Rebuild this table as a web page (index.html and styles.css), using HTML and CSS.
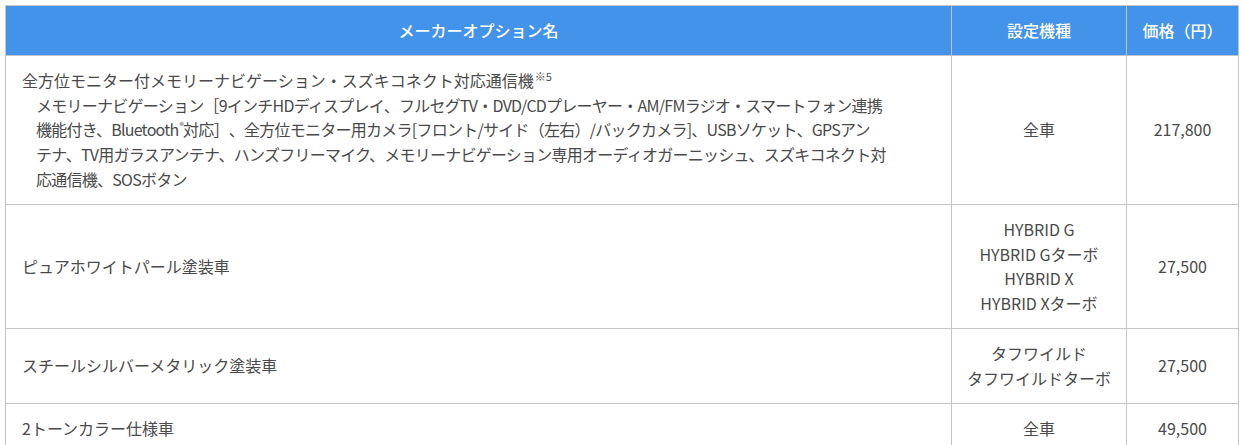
FILE: index.html
```html
<!DOCTYPE html>
<html lang="ja">
<head>
<meta charset="utf-8">
<link rel="stylesheet" href="styles.css">
</head>
<body>
<table class="spec">
  <colgroup>
    <col class="c-name">
    <col class="c-model">
    <col class="c-price">
  </colgroup>
  <thead>
    <tr>
      <th>メーカーオプション名</th>
      <th>設定機種</th>
      <th>価格（円）</th>
    </tr>
  </thead>
  <tbody>
    <tr>
      <td class="name">全方位モニター付メモリーナビゲーション・スズキコネクト対応通信機<sup>※5</sup>
        <div class="note">メモリーナビゲーション［9インチHDディスプレイ、フルセグTV・DVD/CDプレーヤー・AM/FMラジオ・スマートフォン連携<br>機能付き、Bluetooth<sup class="reg">®</sup>対応］、全方位モニター用カメラ[フロント/サイド（左右）/バックカメラ]、USBソケット、GPSアン<br>テナ、TV用ガラスアンテナ、ハンズフリーマイク、メモリーナビゲーション専用オーディオガーニッシュ、スズキコネクト対<br>応通信機、SOSボタン</div>
      </td>
      <td>全車</td>
      <td>217,800</td>
    </tr>
    <tr>
      <td class="name">ピュアホワイトパール塗装車</td>
      <td>HYBRID G<br>HYBRID Gターボ<br>HYBRID X<br>HYBRID Xターボ</td>
      <td>27,500</td>
    </tr>
    <tr>
      <td class="name">スチールシルバーメタリック塗装車</td>
      <td>タフワイルド<br>タフワイルドターボ</td>
      <td>27,500</td>
    </tr>
    <tr>
      <td class="name">2トーンカラー仕様車</td>
      <td>全車</td>
      <td>49,500</td>
    </tr>
  </tbody>
</table>
</body>
</html>
```

FILE: styles.css
```css
html, body {
  margin: 0;
  padding: 0;
  background: #fff;
}
body {
  padding: 5px;
  font-family: "Noto Sans CJK JP", "Noto Sans", sans-serif;
  font-size: 16px;
  line-height: 1.55;
  color: #4a4a4a;
  text-spacing-trim: space-all;
}
.spec {
  border-collapse: collapse;
  width: 1233px;
  table-layout: fixed;
}
.c-name { width: 946px; }
.c-model { width: 175px; }
.c-price { width: 112px; }
.spec th,
.spec td {
  border: 1px solid #c4c4c4;
  padding: 12px 8px;
  text-align: center;
  vertical-align: middle;
}
.spec th {
  background: #4493ea;
  color: #fff;
  font-weight: 500;
}
.spec td.name {
  text-align: left;
  padding: 12px 8px 12px 16px;
}
.note {
  margin: 0 0 0 14px;
  letter-spacing: -0.75px;
  white-space: nowrap;
}
sup {
  font-size: 11px;
  line-height: 0;
  vertical-align: 6px;
  margin-left: 1px;
}
sup.reg {
  font-size: 9px;
  vertical-align: 7px;
}
```
